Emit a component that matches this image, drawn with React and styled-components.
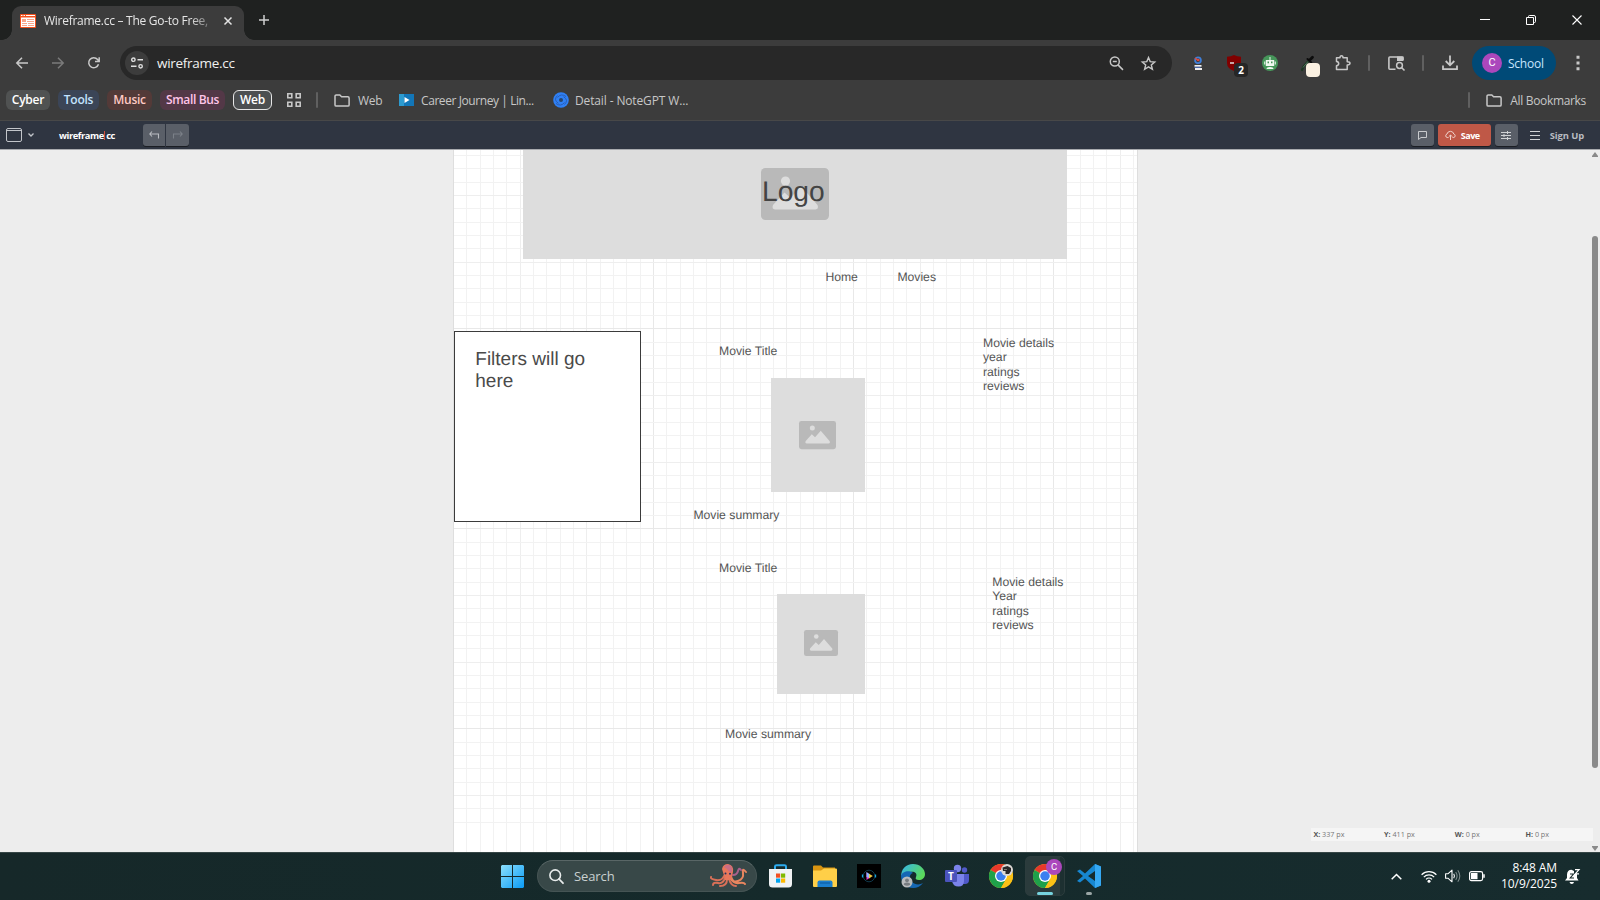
import React from "react";
import styled, { createGlobalStyle } from "styled-components";

const GlobalStyle = createGlobalStyle`
  * { box-sizing: border-box; }
  html, body { margin: 0; padding: 0; overflow: hidden; }
  body { font-family: "Open Sans", "Noto Sans", sans-serif; }
`;

const Screen = styled.div`
  width: 1600px;
  height: 900px;
  display: flex;
  flex-direction: column;
  overflow: hidden;
  background: #ededed;
`;

const Icon = styled.svg`
  display: block;
  flex: none;
  width: ${(p) => p.$w}px;
  height: ${(p) => p.$h || p.$w}px;
  margin-left: ${(p) => p.$ml || 0}px;
  overflow: visible;
  fill: none;
`;

const Label = styled.span`
  flex: none;
  white-space: nowrap;
  display: block;
  width: ${(p) => (p.$w ? p.$w + "px" : "auto")};
  margin-left: ${(p) => p.$ml || 0}px;
  font-size: ${(p) => p.$size || 12}px;
  font-weight: ${(p) => p.$weight || 400};
  letter-spacing: ${(p) => p.$track || 0}px;
  color: ${(p) => p.$color || "#c7c7c7"};
`;

const Divider = styled.i`
  flex: none;
  width: 2px;
  height: 16px;
  border-radius: 1px;
  background: #606060;
  margin-left: ${(p) => p.$ml}px;
`;

/* ---------- browser chrome ---------- */

const TabStrip = styled.header`
  height: 40px;
  flex: none;
  display: flex;
  align-items: flex-start;
  background: #1f2120;
  padding: 6px 0 0 12px;
`;

const Tab = styled.div`
  position: relative;
  width: 232px;
  height: 34px;
  display: flex;
  align-items: center;
  padding: 0 10px 5px 8px;
  border-radius: 9px 9px 0 0;
  background: #3c3c3c;
  &::before, &::after {
    content: "";
    position: absolute;
    bottom: 0;
    width: 10px;
    height: 10px;
  }
  &::before { left: -10px; background: radial-gradient(circle at 0 0, transparent 9.5px, #3c3c3c 10px); }
  &::after { right: -10px; background: radial-gradient(circle at 100% 0, transparent 9.5px, #3c3c3c 10px); }
`;

const TabTitle = styled(Label)`
  mask-image: linear-gradient(90deg, #000 146px, rgba(0, 0, 0, 0.3) 166px);
`;

const WindowControls = styled.div`
  display: flex;
  align-items: center;
  height: 28px;
  margin-left: auto;
  padding-right: 18px;
  gap: 36px;
`;

const Toolbar = styled.div`
  height: 46px;
  flex: none;
  display: flex;
  align-items: center;
  background: #3c3c3c;
  padding: 0 0 0 16px;
`;

const Omnibox = styled.div`
  width: 1052px;
  flex: none;
  height: 34px;
  margin-left: 20px;
  border-radius: 17px;
  background: #282828;
  display: flex;
  align-items: center;
  padding: 0 16.5px 0 5px;
`;

const SiteInfo = styled.div`
  width: 24px;
  height: 24px;
  border-radius: 50%;
  background: #3c3c3c;
  display: grid;
  place-items: center;
`;

const Push = styled.div`
  margin-left: auto;
  display: flex;
  align-items: center;
`;

const Extension = styled.div`
  position: relative;
  flex: none;
  width: 16px;
  height: 16px;
  margin-left: ${(p) => p.$ml}px;
`;

const ExtensionBadge = styled.span`
  position: absolute;
  left: 7px;
  top: 8px;
  width: 14px;
  height: 14px;
  border-radius: 4px;
  background: ${(p) => p.$bg};
  color: #fff;
  font-size: 10px;
  font-weight: 700;
  line-height: 14px;
  text-align: center;
`;

const Profile = styled.div`
  width: 84px;
  flex: none;
  height: 34px;
  margin-left: 14px;
  border-radius: 17px;
  background: #004a77;
  display: flex;
  align-items: center;
  padding-left: 10px;
`;

const Avatar = styled.span`
  width: ${(p) => p.$size}px;
  height: ${(p) => p.$size}px;
  border-radius: 50%;
  background: #ab47bc;
  color: #fff;
  font: 400 ${(p) => p.$font}px/${(p) => p.$size}px Roboto, sans-serif;
  text-align: center;
`;

const Bookmarks = styled.nav`
  height: 35px;
  flex: none;
  display: flex;
  align-items: center;
  background: #3c3c3c;
  border-bottom: 1px solid #484848;
  padding: 0 14px 6px 6px;
`;

const Chip = styled.span`
  width: ${(p) => p.$w}px;
  height: 20px;
  margin-right: 8px;
  border-radius: 6px;
  border: 1px solid ${(p) => p.$border || "transparent"};
  background: ${(p) => p.$bg};
  color: ${(p) => p.$color};
  font-size: 12px;
  font-weight: 600;
  letter-spacing: ${(p) => p.$track ?? -0.25}px;
  line-height: 18px;
  display: flex;
  justify-content: center;
  white-space: nowrap;
`;

/* ---------- wireframe.cc application ---------- */

const AppBar = styled.div`
  height: 29px;
  flex: none;
  display: flex;
  align-items: center;
  background: #2f3541;
  border-bottom: 1px solid #a9abaf;
  padding: 0 16px 0 6px;
`;

const Brand = styled(Label)`
  display: flex;
  align-items: center;
`;

const Caret = styled.i`
  width: 1px;
  height: 9px;
  margin: 0 1px 0 0.5px;
  background: #d4503e;
`;

const BarButton = styled.span`
  width: ${(p) => p.$w || 23}px;
  height: 22px;
  margin-left: ${(p) => p.$ml || 0}px;
  border-radius: ${(p) => p.$radius || "3px"};
  background: ${(p) => p.$bg || "#5a5f68"};
  box-shadow: 0 1px 0 #1b1e24;
  display: flex;
  align-items: center;
  justify-content: center;
  gap: 5px;
`;

const SaveButton = styled(BarButton)`
  padding-right: 4px;
`;

const Workspace = styled.main`
  position: relative;
  height: 702px;
  flex: none;
  overflow: hidden;
  background: #ededed;
`;

const Page = styled.section`
  position: relative;
  width: 685px;
  height: 702px;
  margin-left: 453px;
  overflow: hidden;
  background: #fff;
  border: solid #dedede;
  border-width: 0 1px;
`;

const Grid = styled.svg`
  display: block;
  width: 683px;
  height: 702px;
`;

const Box = styled.div`
  position: absolute;
  left: ${(p) => p.$x}px;
  top: ${(p) => p.$y}px;
  width: ${(p) => p.$w}px;
  height: ${(p) => p.$h}px;
  display: grid;
  place-items: center;
  padding: 0 1px 0.5px 0;
  background: #ddd;
`;

const FilterPanel = styled.div`
  position: absolute;
  left: 0;
  top: 181px;
  width: 187px;
  height: 191px;
  padding: 17px 40px 0 20.3px;
  border: 1px solid #3b3b3b;
  background: #fff;
  color: #4a4a4a;
  font: 19px/22px "Liberation Sans", Arial, sans-serif;
  text-rendering: geometricPrecision;
`;

const Note = styled.p`
  position: absolute;
  left: ${(p) => p.$x}px;
  top: ${(p) => p.$y}px;
  margin: 0;
  white-space: pre;
  color: ${(p) => p.$color || "#555"};
  font: ${(p) => p.$size || 12.2}px/${(p) => p.$line || 14.3}px "Liberation Sans", Arial, sans-serif;
  text-rendering: geometricPrecision;
`;

const Scrollbar = styled.div`
  position: absolute;
  right: 2px;
  top: 0;
  width: 6px;
  height: 702px;
  display: flex;
  flex-direction: column;
  align-items: center;
  padding: 2px 0 1px;
`;

const Thumb = styled.i`
  width: 6px;
  height: 532px;
  margin: 79px 0 auto;
  border-radius: 3px;
  background: #8a8a8a;
`;

const StatusBar = styled.div`
  position: absolute;
  left: 1311px;
  top: 678px;
  width: 282px;
  height: 13px;
  display: grid;
  grid-template-columns: repeat(4, 70.7px);
  padding-left: 2.4px;
  background: #f5f5f5;
  color: #777;
  font-size: 7.2px;
  line-height: 13px;
  b { color: #555; }
`;

/* ---------- desktop taskbar ---------- */

const Taskbar = styled.footer`
  height: 48px;
  flex: none;
  display: flex;
  align-items: center;
  background: linear-gradient(90deg, #162829, #152a2b 50%, #172c2e);
  box-shadow: inset 0 1px 0 #364646;
  padding: 0 20px 0 501px;
`;

const SearchBox = styled.div`
  width: 220px;
  height: 32px;
  margin-left: 13px;
  border-radius: 16px;
  background: #384848;
  border: 1px solid #455454;
  border-top-color: #596666;
  display: flex;
  align-items: center;
  padding: 0 8px 0 11px;
`;

const TaskApp = styled.div`
  position: relative;
  width: 24px;
  height: 24px;
  margin-left: ${(p) => p.$ml ?? 20}px;
`;

const ActiveTile = styled.div`
  position: relative;
  width: 40px;
  height: 40px;
  margin-left: 12px;
  border-radius: 5px;
  border: 1px solid #2c3c3d;
  background: linear-gradient(90deg, #2b3b3c 34px, #1d3031 34px);
  padding: 7px;
`;

const Corner = styled.div`
  position: absolute;
  left: ${(p) => p.$x}px;
  top: ${(p) => p.$y}px;
  display: flex;
`;

const Indicator = styled.i`
  position: absolute;
  left: ${(p) => p.$x}px;
  top: ${(p) => p.$y}px;
  width: ${(p) => p.$w}px;
  height: 3px;
  border-radius: 2px;
  background: ${(p) => p.$bg};
`;

const Clock = styled.div`
  width: 66px;
  margin: 0 0 1px 6px;
  text-align: right;
  color: #fff;
  font-size: 12px;
  line-height: 16px;
  letter-spacing: -0.1px;
  white-space: nowrap;
`;

const FolderIcon = ({ ml }) => (
  <Icon $w={16} $h={13} $ml={ml} viewBox="0 0 16 13">
    <path d="M1 2.200C1 1.400 1.500.9 2.200.9h3.600l1.800 1.800h6.300c.7 0 1.200.5 1.200 1.200v7c0 .7-.5 1.200-1.200 1.200H2.200c-.7 0-1.200-.5-1.200-1.200z" stroke="#c7c7c7" strokeWidth="1.500" />
  </Icon>
);

const Placeholder = ({ w }) => (
  <Icon $w={w} $h={w * 0.765} viewBox="0 0 68 52">
    <rect width="68" height="52" rx="4.500" fill="#b9b9b9" />
    <circle cx="24.500" cy="13" r="4.600" fill="#ddd" />
    <path d="M12 37 L23.500 24.500 L29.500 30 L40 18 L56.500 37 Q58 41 54.500 41.500 H14 Q10.500 41 12 37Z" fill="#ddd" />
  </Icon>
);

const Chrome = () => (
  <Icon $w={24} viewBox="0 0 48 48">
    <circle cx="24" cy="24" r="24" fill="#fbc116" />
    <path d="M24 24 3.200 12A24 24 0 0 1 44.800 12z" fill="#e8382b" />
    <path d="M3.200 12A24 24 0 0 0 24 48L34.400 30 24 24z" fill="#1fa14a" />
    <path d="M24 12h20.800A24 24 0 0 1 24 48l10.400-18z" fill="#fbc116" />
    <circle cx="24" cy="24" r="12" fill="#fff" />
    <circle cx="24" cy="24" r="9.500" fill="#3b7ff0" />
  </Icon>
);

const PITCH = 40 / 3;
const lineColor = (i) => (i % 15 === 0 ? "#e8e8e8" : i % 5 === 0 ? "#eeeeee" : "#f2f2f2");

const CanvasGrid = () => {
  const order = (a, b) => (a % 5 === 0) - (b % 5 === 0);
  const cols = Array.from({ length: 52 }, (_, i) => i).sort(order);
  const rows = Array.from({ length: 54 }, (_, i) => i - 1).sort(order);
  return (
    <Grid viewBox="0 0 683 702">
      {cols.map((i) => (
        <rect key={"c" + i} x={Math.round(i * PITCH) - 1} y="0" width="1" height="702" fill={lineColor(i)} />
      ))}
      {rows.map((i) => (
        <rect key={"r" + i} x="0" y={Math.round(-21.67 + i * PITCH)} width="683" height="1" fill={lineColor(i)} />
      ))}
    </Grid>
  );
};

function TabRow() {
  return (
    <TabStrip>
      <Tab>
        <Icon $w={16} $h={14} viewBox="0 0 16 14">
          <rect width="16" height="14" rx="1" fill="#f4511e" />
          <path d="M1 1h1.500v1H1zM3.500 1H5v1H3.500zM6 1h9v1H6zM1 3.500h14V13H1z" fill="#fff" />
          <path d="M2 5h4v3H2zM7 5h7v1H7zM7 7h7v1H7zM2 9h5v1H2zM8 9h6v1H8zM2 11h5v1H2zM8 11h6v1H8z" fill="#f9a58a" />
        </Icon>
        <TabTitle $ml={8} $w={166} $size={12} $track={-0.27} $color="#e6e6e6">Wireframe.cc – The Go-to Free,</TabTitle>
        <Icon $w={8} $ml={14} viewBox="0 0 8 8"><path d="M.5.5l7 7m0-7l-7 7" stroke="#e3e3e3" strokeWidth="1.500" /></Icon>
      </Tab>
      <Icon $w={10} $ml={15} $h={28} viewBox="0 -9 10 28"><path d="M5 0v10M0 5h10" stroke="#d0d0d0" strokeWidth="1.500" /></Icon>
      <WindowControls>
        <Icon $w={10} viewBox="0 0 10 10"><path d="M0 4.500h10" stroke="#fff" /></Icon>
        <Icon $w={10} viewBox="0 0 10 10"><path d="M.5 2.500h7v7h-7zM2.500 2V1.500Q2.500.5 3.500.5H8Q9.500.5 9.500 2v4.500Q9.500 7.500 8.500 7.500H8" stroke="#fff" /></Icon>
        <Icon $w={10} viewBox="0 0 10 10"><path d="M.5.5l9 9m0-9l-9 9" stroke="#fff" strokeWidth="1.100" /></Icon>
      </WindowControls>
    </TabStrip>
  );
}

function AddressRow() {
  return (
    <Toolbar>
      <Icon $w={12} viewBox="0 0 12 12"><path d="M12 6H1M6 .7.8 6 6 11.300" stroke="#c9c9c9" strokeWidth="1.500" /></Icon>
      <Icon $w={12} $ml={24} viewBox="0 0 12 12"><path d="M0 6h11M6 .7 11.200 6 6 11.300" stroke="#7b7b7b" strokeWidth="1.500" /></Icon>
      <Icon $w={12} $ml={24} viewBox="0 0 12 12"><path d="M10.500 7.300A5 5 0 1 1 9.600 2.600L11 4.200M11.200.3v4.200H7" stroke="#c9c9c9" strokeWidth="1.500" /></Icon>
      <Omnibox>
        <SiteInfo>
          <Icon $w={12} viewBox="0 0 12 12">
            <path d="M6.500 2.700H12M0 9.300h5.500" stroke="#e0e0e0" strokeWidth="1.500" />
            <circle cx="2.400" cy="2.700" r="1.700" stroke="#e0e0e0" strokeWidth="1.400" />
            <circle cx="9.600" cy="9.300" r="1.700" stroke="#e0e0e0" strokeWidth="1.400" />
          </Icon>
        </SiteInfo>
        <Label $ml={8} $size={13.5} $color="#f0f0f0" $track={-0.28}>wireframe.cc</Label>
        <Push>
          <Icon $w={15} viewBox="0 0 15 15"><circle cx="5.800" cy="5.500" r="4.500" stroke="#c7c7c7" strokeWidth="1.500" /><path d="M9 8.900l5 5M3.800 5.500h4" stroke="#c7c7c7" strokeWidth="1.500" /></Icon>
          <Icon $w={15} $ml={17} viewBox="0 0 15 15"><path d="M7.500 1.500l1.700 4.100 4.500.4-3.400 2.900 1.100 4.400-3.900-2.400-3.900 2.400 1.100-4.400L1.300 6l4.500-.4z" stroke="#c7c7c7" strokeWidth="1.400" /></Icon>
        </Push>
      </Omnibox>
      <Extension $ml={18}>
        <Icon $w={16} viewBox="0 0 16 16">
          <circle cx="8" cy="5.200" r="2.900" stroke="#3f7fd8" strokeWidth="1.800" />
          <path d="M5 3L8 5.500" stroke="#e04a3c" strokeWidth="1.600" /><circle cx="8.300" cy="5" r="1.300" fill="#e04a3c" />
          <path d="M4.500 10h7v1.800h-7zM5 13h7v2H5z" fill="#eee" /><path d="M4.500 11.800h6v1h-6z" fill="#4e74c4" />
        </Icon>
      </Extension>
      <Extension $ml={21}>
        <Icon $w={14} $h={16} viewBox="0 0 14 16"><path d="M7 0q3 1.800 7 1.800V8q0 5.500-7 8-7-2.500-7-8V1.800Q4 1.800 7 0z" fill="#800000" /><path d="M3 8h4" stroke="#ddd" strokeWidth="1.500" /></Icon>
        <ExtensionBadge $bg="#262626">2</ExtensionBadge>
      </Extension>
      <Extension $ml={19}>
        <Icon $w={16} viewBox="0 0 16 16"><circle cx="8" cy="8" r="8" fill="#46965a" /><path d="M3.800 5h8.400v6H3.800zM4.500 14q0-2 3.500-2t3.500 2zM7.500 2h1v3h-1zM2.200 6.500h1v3h-1zM12.800 6.500h1v3h-1z" fill="#f1f8f1" /><path d="M5.500 6.500H7v1.800H5.500zM9 6.500h1.500v1.800H9z" fill="#46965a" /></Icon>
      </Extension>
      <Extension $ml={21}>
        <Icon $w={16} viewBox="0 0 16 16"><path d="M9 6.500L4.500 11.500 3 15" stroke="#1c3622" strokeWidth="2.200" strokeLinecap="round" /><path d="M9 6.500l-5 6" stroke="#5d8266" strokeWidth=".8" /><path d="M8.500 4l3.800 3.500" stroke="#0c0c0c" strokeWidth="2" strokeLinecap="round" /><path d="M11 4.800L13.500 2.200" stroke="#0c0c0c" strokeWidth="2.800" strokeLinecap="round" /></Icon>
        <ExtensionBadge $bg="#fbf1e2" />
      </Extension>
      <Icon $w={16} $h={16} $ml={20} viewBox="0 0 16 16"><path d="M1.500 2.800H5q0-2 1.500-2t1.500 2h4.200v3.900q2.800 0 2.800 1.600t-2.800 1.600v4.600H1.500v-3.700q2.200-.2 2.200-2.200T1.500 6.400z" stroke="#c7c7c7" strokeWidth="1.500" strokeLinejoin="round" /></Icon>
      <Divider $ml={17} />
      <Icon $w={17} $h={15} $ml={18} viewBox="0 0 17 15"><path d="M7.500 13.300H1.800q-.9 0-.9-1V2q0-1 .9-1H14q1 0 1 1v2" stroke="#c7c7c7" strokeWidth="1.600" /><path d="M9 .5h6.500V5H9z" fill="#c7c7c7" /><circle cx="11.500" cy="9.500" r="2.900" stroke="#c7c7c7" strokeWidth="1.500" /><path d="M13.500 11.500l3 3" stroke="#c7c7c7" strokeWidth="1.600" /></Icon>
      <Divider $ml={17} />
      <Icon $w={16} $h={16} $ml={18} viewBox="0 0 16 16"><path d="M8 .5v9.500M3.700 6L8 10.300 12.300 6M1 10.500v3.700h14v-3.700" stroke="#c7c7c7" strokeWidth="1.800" /></Icon>
      <Profile>
        <Avatar $size={20} $font={11}>C</Avatar>
        <Label $ml={6} $size={12} $color="#c8e6ff" $track={-0.25}>School</Label>
      </Profile>
      <Icon $w={4} $h={16} $ml={20} viewBox="0 0 4 16"><path d="M.5.700h3v3h-3zM.5 6.500h3v3h-3zM.5 12.300h3v3h-3z" fill="#c7c7c7" /></Icon>
    </Toolbar>
  );
}

function BookmarkRow() {
  return (
    <Bookmarks>
      <Chip $w={44} $bg="#505252" $color="#fff">Cyber</Chip>
      <Chip $w={41} $bg="#3b4557" $color="#c3e3ff">Tools</Chip>
      <Chip $w={45} $bg="#533a38" $color="#ffc9c3">Music</Chip>
      <Chip $w={65} $bg="#533847" $color="#ffc4e8" $track={-0.35}>Small Bus</Chip>
      <Chip $w={39} $bg="#4c4f51" $border="#e6e6e6" $color="#fff">Web</Chip>
      <Icon $w={14} $ml={7} viewBox="0 0 14 14"><path d="M.8.800h4v4h-4zM9.200.800h4v4h-4zM.8 9.200h4v4h-4zM9.200 9.200h4v4h-4z" stroke="#c7c7c7" strokeWidth="1.600" /></Icon>
      <Divider $ml={15} />
      <FolderIcon ml={16} />
      <Label $ml={8} $w={41} $track={-0.3}>Web</Label>
      <Icon $w={15} $h={12} viewBox="0 0 15 12"><path d="M0 0h15v12H0z" fill="#1276b8" /><path d="M0 0h5v12H0z" fill="#2d9bd0" /><path d="M5.500 3l5 3-5 3z" fill="#fff" /></Icon>
      <Label $ml={7} $w={132} $track={-0.42}>Career Journey | Lin...</Label>
      <Icon $w={16} viewBox="0 0 16 16"><circle cx="8" cy="8" r="7.800" fill="#2f80f5" /><path d="M13 4.500Q8 1 4.500 5.500M11.500 12.500Q16 8 10.500 4.700M3 11.500q5 3.500 8.500-1M4.500 3.500Q0 8 5.500 11.300" stroke="#2859ab" strokeWidth=".9" /><circle cx="8" cy="8" r="2" fill="#26466f" /></Icon>
      <Label $ml={6} $track={-0.13}>Detail - NoteGPT W...</Label>
      <Push>
        <Divider $ml={0} />
        <FolderIcon ml={16} />
        <Label $ml={8} $track={-0.33}>All Bookmarks</Label>
      </Push>
    </Bookmarks>
  );
}

function EditorBar() {
  return (
    <AppBar>
      <Icon $w={16} $h={14} viewBox="0 0 16 14"><rect x=".5" y=".5" width="15" height="13" rx="1.500" stroke="#c2c5ca" /><path d="M1 2.500h14" stroke="#c2c5ca" /></Icon>
      <Icon $w={6} $h={4} $ml={6} viewBox="0 0 6 4"><path d="M.5.5L3 3 5.500.5" stroke="#c2c5ca" strokeWidth="1.300" /></Icon>
      <Brand $ml={25} $w={84} $size={9.3} $weight={700} $track={-0.43} $color="#fff">wireframe<Caret />cc</Brand>
      <BarButton $w={22} $radius="3px 0 0 3px"><Icon $w={10} $h={8} viewBox="0 0 10 8"><path d="M3 .5L.8 3 3 5.500M1 3h8.500v4.500" stroke="#b9bcc1" strokeWidth="1.100" /></Icon></BarButton>
      <BarButton $w={23} $ml={1} $radius="0 3px 3px 0"><Icon $w={10} $h={8} viewBox="0 0 10 8"><path d="M7 .5L9.200 3 7 5.500M9 3H.5v4.500" stroke="#7b8088" strokeWidth="1.100" /></Icon></BarButton>
      <Push>
        <BarButton><Icon $w={9} $h={9} viewBox="0 0 9 9"><path d="M.5.500h8v6H3l-2.500 2z" stroke="#c8cacd" /></Icon></BarButton>
        <SaveButton $w={53} $ml={4} $bg="#bf5847">
          <Icon $w={11} $h={9} viewBox="0 0 11 9"><path d="M3.500 6.500H2.200A1.800 1.800 0 0 1 2 3 3.500 3.500 0 0 1 8.800 3a1.800 1.800 0 0 1 0 3.500H7.500M5.500 9V4M3.800 5.700L5.500 4l1.700 1.700" stroke="#efd0ca" /></Icon>
          <Label $size={9} $weight={700} $track={-0.5} $color="#fff">Save</Label>
        </SaveButton>
        <BarButton $ml={4}><Icon $w={10} $h={9} viewBox="0 0 10 9"><path d="M0 1.500h10M0 4.500h10M0 7.500h10M6.500 0v3M3 3v3M6.500 6v3" stroke="#d0d2d5" /></Icon></BarButton>
        <Icon $w={10} $h={9} $ml={12} viewBox="0 0 10 9"><path d="M0 .5h10M0 4.500h10M0 8.500h10" stroke="#d0d2d5" /></Icon>
        <Label $ml={10} $size={9.4} $weight={700} $track={-0.1} $color="#b9bcc1">Sign Up</Label>
      </Push>
    </AppBar>
  );
}

function Canvas() {
  return (
    <Workspace>
      <Page>
        <CanvasGrid />
        <Box $x={69} $y={-21} $w={544} $h={130}><Placeholder w={68} /></Box>
        <Note $x={308} $y={24.8} $size={28.2} $line={32} $color="#444">Logo</Note>
        <Note $x={371.4} $y={120}>Home</Note>
        <Note $x={443.4} $y={120}>Movies</Note>
        <FilterPanel>Filters will go here</FilterPanel>
        <Note $x={265} $y={194}>Movie Title</Note>
        <Box $x={317} $y={228} $w={94} $h={114}><Placeholder w={37} /></Box>
        <Note $x={239.4} $y={358}>Movie summary</Note>
        <Note $x={529} $y={186}>{"Movie details\nyear\nratings\nreviews"}</Note>
        <Note $x={265} $y={411}>Movie Title</Note>
        <Box $x={323} $y={444} $w={88} $h={99}><Placeholder w={34} /></Box>
        <Box $x={323} $y={543} $w={88} $h={1} />
        <Note $x={538.3} $y={425} $line={14.4}>{"Movie details\nYear\nratings\nreviews"}</Note>
        <Note $x={271} $y={577}>Movie summary</Note>
      </Page>
      <StatusBar>
        <span><b>X:</b> 337 px</span>
        <span><b>Y:</b> 411 px</span>
        <span><b>W:</b> 0 px</span>
        <span><b>H:</b> 0 px</span>
      </StatusBar>
      <Scrollbar>
        <Icon $w={6} $h={5} viewBox="0 0 6 5"><path d="M3 0l3 4v1H0V4z" fill="#8a8a8a" /></Icon>
        <Thumb />
        <Icon $w={6} $h={5} viewBox="0 0 6 5"><path d="M3 5l3-4V0H0v1z" fill="#8a8a8a" /></Icon>
      </Scrollbar>
    </Workspace>
  );
}

function DesktopBar() {
  return (
    <Taskbar>
      <Icon $w={23} viewBox="0 0 23 23">
        <defs><linearGradient id="win" x1="0" y1="0" x2="1" y2="1"><stop stopColor="#8be0fd" /><stop offset="1" stopColor="#0a9bf5" /></linearGradient></defs>
        <path d="M1 0h10v11H0V1zM12 0h10l1 1v10H12zM0 12h11v11H1l-1-1zM12 12h11v10l-1 1H12z" fill="url(#win)" />
      </Icon>
      <SearchBox>
        <Icon $w={15} viewBox="0 0 15 15"><circle cx="6.200" cy="6.200" r="5.300" stroke="#e8ecec" strokeWidth="1.600" /><path d="M10 10l4 4.200" stroke="#e8ecec" strokeWidth="1.800" strokeLinecap="round" /></Icon>
        <Label $ml={10} $size={13} $color="#c9d0d0" $track={-0.1}>Search</Label>
        <Push>
          <Icon $w={38} $h={24} viewBox="0 0 38 24">
            <g strokeLinecap="round" strokeWidth="2">
              <path d="M14 12Q12 17 6 16T1 13M15 14q-2 6-7 5t-5 2M17 15q0 7-7 7M19 15q2 7 7 7" stroke="#d97058" />
              <path d="M21 12q1 7 7 5t5-8 3-1M20 14q4 6 9 5t6 1" stroke="#e9865f" />
              <path d="M23 11q4 0 5-4t3-1" stroke="#a8608c" />
            </g>
            <path d="M12 5q1-5 6-5 6 1 5 8-1 5-2 8h-6Q14 11 12 5z" fill="#e8775b" />
            <path d="M14 3q2-3 6-2 3 2 2 7-3 1-5-3z" fill="#c96d84" />
            <circle cx="15.500" cy="9.500" r="1" fill="#29335d" /><circle cx="20" cy="9.800" r="1" fill="#29335d" />
          </Icon>
        </Push>
      </SearchBox>
      <TaskApp $ml={12}>
        <Icon $w={23} $h={24} viewBox="0 0 23 24"><path d="M6 6V2.500Q6 1.200 7.500 1.200h8q1.500 0 1.500 1.300V6" stroke="#2dacee" strokeWidth="2" /><path d="M0 5h23v15q0 3.500-3.500 3.500h-16Q0 23.500 0 20z" fill="#f0f2f4" /><path d="M7 9.500h4.200v4.200H7z" fill="#f25022" /><path d="M12 9.500h4.200v4.200H12z" fill="#7fba00" /><path d="M7 14.500h4.200v4.200H7z" fill="#00a4ef" /><path d="M12 14.500h4.200v4.200H12z" fill="#ffb900" /></Icon>
      </TaskApp>
      <TaskApp>
        <Icon $w={24} viewBox="0 0 24 24"><path d="M0 2.500Q0 1.500 1 1.500h7l2 2h12v5H0z" fill="#d99411" /><path d="M0 6.500h8l3-2h12q1 0 1 1V22q0 1-1 1H1q-1 0-1-1z" fill="#ffcf48" /><path d="M4.500 23v-4.500q0-2 2-2h11q2 0 2 2V23z" fill="#1b7fcf" /><path d="M7 19h10" stroke="#0c5a9e" /></Icon>
      </TaskApp>
      <TaskApp>
        <Icon $w={24} viewBox="0 0 24 24"><path d="M0 0h24v24H0z" fill="#000" /><circle cx="12" cy="12" r="5.800" stroke="#174f68" strokeWidth=".7" /><path d="M5.500 10.500v3M18.500 10.500v3" stroke="#16a6de" strokeWidth="1.300" /><path d="M9.500 8v8l3-2z" fill="#ec35c8" /><path d="M9.500 8l3 2v4l-3-1z" fill="#8fb4ff" /><path d="M12 9.700l3.800 2.300-3.800 2.500z" fill="#f2c83d" /></Icon>
      </TaskApp>
      <TaskApp>
        <Icon $w={24} viewBox="0 0 24 24">
          <defs><linearGradient id="edge" x1="0" y1="0" x2="1" y2=".5"><stop stopColor="#35b4ef" /><stop offset="1" stopColor="#5bd95b" /></linearGradient></defs>
          <path d="M0 13C0 5 5 0 12 0s12 5 12 10c0 4-3 6-6 6-3 0-4-1-3-3 2-5-3-6-6-5-5 1-9 3-9 5z" fill="url(#edge)" />
          <path d="M0 12c1-5 9-6 12-3-4 1-4 6-1 9s8 3 11 1c-2 3-6 5-10 5C5 24 0 19 0 12z" fill="#1567b4" />
          <circle cx="6" cy="18" r="5.500" fill="#b9bcbe" /><circle cx="6" cy="16.300" r="1.900" fill="#777c80" /><path d="M2.800 20.800q0-2.300 3.200-2.300t3.200 2.300q-3 2-6.400 0z" fill="#777c80" />
        </Icon>
      </TaskApp>
      <TaskApp>
        <Icon $w={24} viewBox="0 0 24 24"><circle cx="19.500" cy="6" r="2.700" fill="#5059c9" /><path d="M15 10h9v6q0 4-4 4h-3z" fill="#5059c9" /><circle cx="12.500" cy="4.500" r="3.700" fill="#7b83eb" /><path d="M7 10h12v7q0 5.500-5.500 5.500T7 17z" fill="#7b83eb" /><rect y="6" width="12" height="12" rx="1" fill="#4b53bc" /><text x="6" y="15.500" fontSize="10" fontWeight="700" textAnchor="middle" fill="#fff" fontFamily="Open Sans, sans-serif">T</text></Icon>
      </TaskApp>
      <TaskApp>
        <Chrome />
        <Corner $x={12} $y={0}><Icon $w={12} viewBox="0 0 12 12"><circle cx="6" cy="6" r="6" fill="#ddd8d4" /><path d="M1.500 3.500l5-1.500 3.500 2v3L8 10H4.500V7H2z" fill="#29282a" /><path d="M3 5.500h3" stroke="#a79f98" strokeWidth=".7" /></Icon></Corner>
      </TaskApp>
      <ActiveTile>
        <Chrome />
        <Corner $x={20} $y={2}><Avatar $size={16} $font={9.5}>C</Avatar></Corner>
        <Indicator $x={11} $y={35} $w={16} $bg="#76d3de" />
      </ActiveTile>
      <TaskApp $ml={12}>
        <Icon $w={24} viewBox="0 0 24 24"><path d="M18 0l6 2.500v19L18 24 8 14.500 3 18.500 0 17l6-5-6-5 3-1.500 5 4zM18 7l-7 5 7 5z" fill="#1787d1" /><path d="M18 0l6 2.500v19L18 24z" fill="#35a8f3" /></Icon>
        <Indicator $x={9} $y={28} $w={6} $bg="#9aa5a5" />
      </TaskApp>
      <Push>
        <Icon $w={11} $h={7} viewBox="0 0 11 7"><path d="M.7 6.300L5.500 1.500l4.800 4.800" stroke="#fff" strokeWidth="1.500" /></Icon>
        <Icon $w={16} $h={13} $ml={19} viewBox="0 0 16 13"><path d="M.6 4.700a10.500 10.500 0 0 1 14.800 0M2.800 7.100a7.400 7.400 0 0 1 10.400 0M5 9.400a4.300 4.300 0 0 1 6 0" stroke="#fff" strokeWidth="1.200" /><circle cx="8" cy="11.200" r="1.500" fill="#fff" /></Icon>
        <Icon $w={16} $h={14} $ml={8} viewBox="0 0 16 14"><path d="M.6 4.700h2.600L7 1.200v11.600L3.200 9.300H.6z" stroke="#fff" strokeWidth="1.100" strokeLinejoin="round" /><path d="M8.700 4.800q1.500 2.200 0 4.400" stroke="#fff" strokeWidth="1.100" /><path d="M10.700 3q2.800 4 0 8M12.800 1.200q4 5.800 0 11.600" stroke="#7e8c8c" strokeWidth="1.100" /></Icon>
        <Icon $w={16} $h={10} $ml={8} viewBox="0 0 16 10"><rect x=".6" y=".6" width="13" height="9" rx="1.800" stroke="#fff" strokeWidth="1.200" /><path d="M2 2h6.500v6.200H2z" fill="#fff" /><path d="M15 3.300v3.400" stroke="#fff" strokeWidth="1.500" /></Icon>
        <Clock>8:48 AM<br />10/9/2025</Clock>
        <Icon $w={15} $h={15} $ml={8} viewBox="0 0 15 15"><path d="M0 11.500l2-2.500V5.500Q2.200 1 6.500.8L9 2v3h3v4l1.500 2.500zM4.500 13h4.500q-.4 2-2.200 2t-2.300-2z" fill="#fff" /><path d="M5 5h3.500L5.200 9H9" stroke="#182a2b" strokeWidth="1.100" /><path d="M10 .700h4L10.300 4.800H14" stroke="#fff" strokeWidth="1.200" /></Icon>
      </Push>
    </Taskbar>
  );
}

export default function App() {
  return (
    <>
      <GlobalStyle />
      <Screen>
        <TabRow />
        <AddressRow />
        <BookmarkRow />
        <EditorBar />
        <Canvas />
        <DesktopBar />
      </Screen>
    </>
  );
}
